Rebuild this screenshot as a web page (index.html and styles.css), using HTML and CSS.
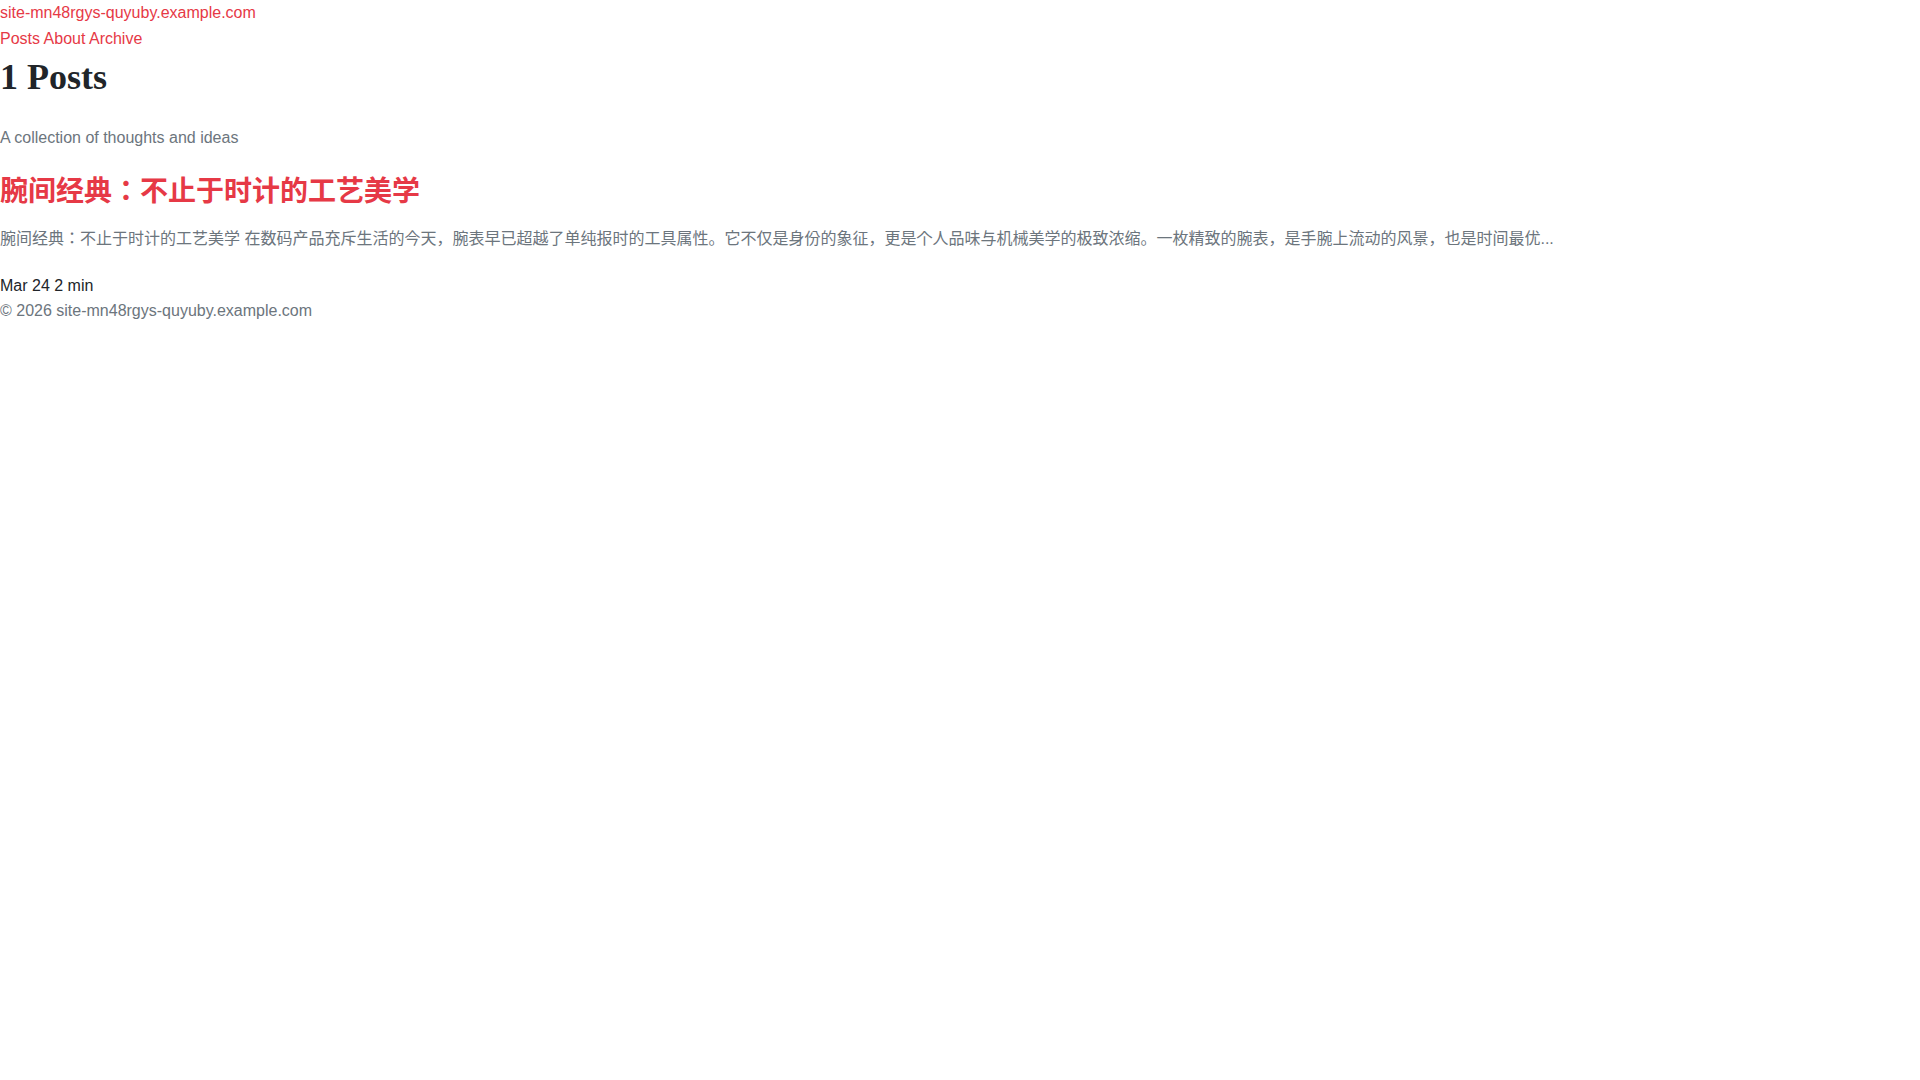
FILE: index.html
```html
<!DOCTYPE html>
<html>
<head>
<meta charset="utf-8">
<title>site-mn48rgys-quyuby.example.com</title>
<link rel="stylesheet" href="styles.css">
</head>
<body>
<header class="site-header">
  <a class="site-title" href="#">site-mn48rgys-quyuby.example.com</a>
  <nav class="site-nav">
    <a href="#">Posts</a> <a href="#">About</a> <a href="#">Archive</a>
  </nav>
</header>
<main class="content">
  <h1 class="page-title">1 Posts</h1>
  <p class="subtitle">A collection of thoughts and ideas</p>
  <article class="post">
    <h2 class="post-title"><a href="#">腕间经典：不止于时计的工艺美学</a></h2>
    <p class="post-excerpt">腕间经典：不止于时计的工艺美学 在数码产品充斥生活的今天，腕表早已超越了单纯报时的工具属性。它不仅是身份的象征，更是个人品味与机械美学的极致浓缩。一枚精致的腕表，是手腕上流动的风景，也是时间最优...</p>
    <div class="post-meta"><span>Mar 24</span> <span>2 min</span></div>
  </article>
</main>
<footer class="site-footer">© 2026 site-mn48rgys-quyuby.example.com</footer>
</body>
</html>
```

FILE: styles.css
```css
html, body {
  margin: 0;
  padding: 0;
  background: #ffffff;
}

body {
  font-family: "Liberation Sans", Arial, "Noto Sans CJK JP", sans-serif;
  font-size: 16px;
  line-height: 1.6;
  color: #212529;
}

a {
  color: #e63946;
  text-decoration: none;
}

.site-header {
  display: flex;
  flex-direction: column;
  align-items: flex-start;
}

.site-title {
  display: block;
}

.page-title {
  font-family: "Liberation Serif", "Times New Roman", serif;
  font-size: 36px;
  font-weight: 700;
  line-height: 1.2;
  margin: 5px 0 0;
  color: #212529;
}

.subtitle {
  margin: 26px 0 0;
  color: #6c757d;
}

.post-title {
  font-size: 28px;
  line-height: 34px;
  font-weight: 700;
  margin: 24px 0 0;
}

.post-excerpt {
  margin: 17px 0 0;
  color: #6c757d;
}

.post-meta {
  margin-top: 21px;
  color: #212529;
}

.site-footer {
  color: #6c757d;
}
```
